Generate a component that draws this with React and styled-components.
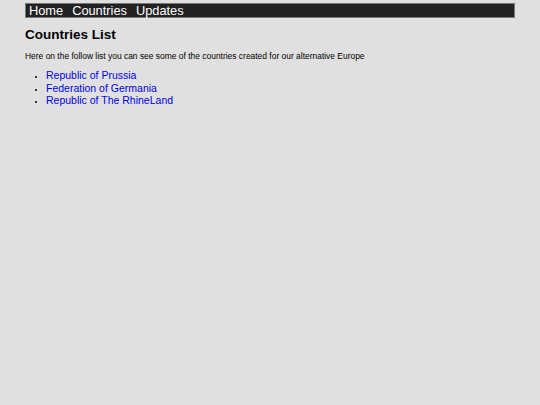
import React from 'react';
import styled, { createGlobalStyle } from 'styled-components';

const GlobalStyle = createGlobalStyle`
  html, body {
    margin: 0;
    padding: 0;
    background-color: #e0e0e0;
    font-family: "Liberation Sans", Arial, sans-serif;
  }
`;

const Page = styled.div`
  padding: 3px 25px 0 25px;
`;

const NavBar = styled.nav`
  background-color: #222222;
  border: 1px solid #777777;
  display: flex;
  gap: 9px;
  padding: 0 3px;
  height: 13px;
  align-items: center;
`;

const NavLink = styled.a`
  color: #ffffff;
  text-decoration: none;
  font-size: 12.8px;
  line-height: 13px;
`;

const Title = styled.h1`
  font-size: 13.5px;
  font-weight: bold;
  margin: 9px 0 0;
  color: #000;
`;

const Intro = styled.p`
  font-size: 8.45px;
  margin: 9px 0 0;
  color: #000;
`;

const List = styled.ul`
  margin: 8px 0 0;
  padding-left: 21px;
  font-size: 10.5px;
  line-height: 12.5px;
  li::marker {
    font-size: 7px;
  }
`;

const CountryLink = styled.a`
  color: #0000ee;
  text-decoration: none;
`;

const countries = ['Republic of Prussia', 'Federation of Germania', 'Republic of The RhineLand'];

export default function App() {
  return (
    <>
      <GlobalStyle />
      <Page>
        <NavBar>
          <NavLink href="#">Home</NavLink>
          <NavLink href="#">Countries</NavLink>
          <NavLink href="#">Updates</NavLink>
        </NavBar>
        <Title>Countries List</Title>
        <Intro>Here on the follow list you can see some of the countries created for our alternative Europe</Intro>
        <List>
          {countries.map((c) => (
            <li key={c}>
              <CountryLink href="#">{c}</CountryLink>
            </li>
          ))}
        </List>
      </Page>
    </>
  );
}
